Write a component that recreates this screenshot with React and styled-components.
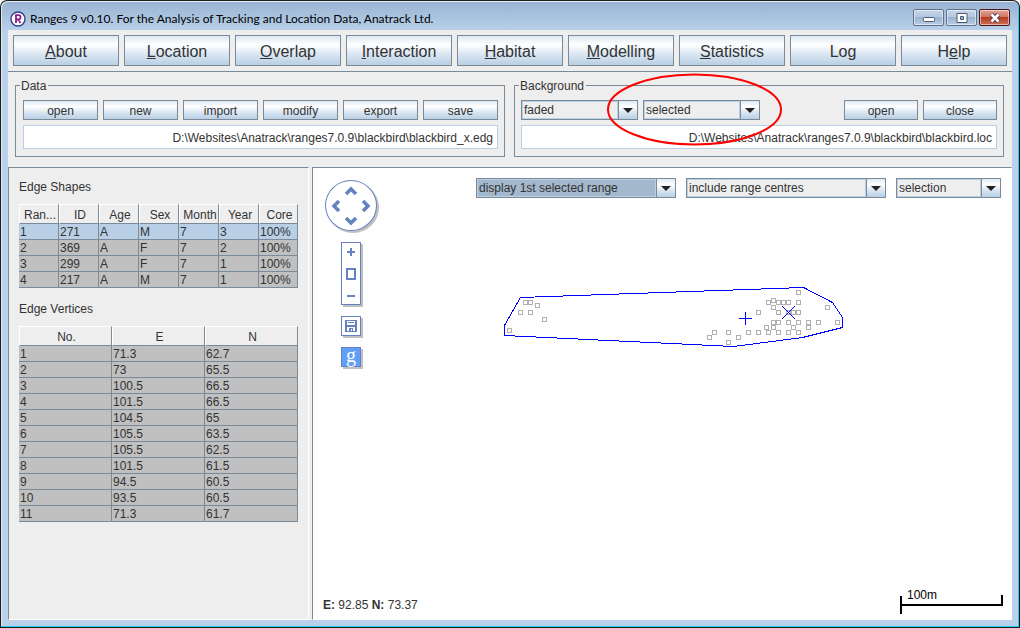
import React from "react";
import styled, { createGlobalStyle, css } from "styled-components";

const line = "#7a8a99";
const pale = "#b8cfe5";
const tool = "#6382bf";
const mark = "#0000ff";
const metal = "linear-gradient(#dde8f3 0%, #ffffff 30%, #dde8f3 60%, #b8cfe5 100%)";

const GlobalStyle = createGlobalStyle`
  *, *::before, *::after { box-sizing: border-box; }
  html, body, #root { height: 100%; }
  body {
    margin: 0;
    background: #ffffff;
    color: #333333;
    font: 12px/16px "Liberation Sans", Arial, sans-serif;
  }
  button, input, select { font: inherit; color: inherit; margin: 0; }
`;

const Window = styled.div`
  min-height: 100%;
  display: flex;
  flex-direction: column;
  padding: 0 6px 7px;
  border: 1px solid #1c1c1c;
  border-right-color: #101820;
  border-radius: 7px 7px 0 0;
  background: linear-gradient(#98b3d2 0, #b9d1ea 30px, #b9d1ea 100%);
  box-shadow: inset -1px -1px 0 #20d0f0, inset 1px 1px 0 #dfeaf5;
`;

const TitleBar = styled.header`
  display: flex;
  align-items: center;
  height: 29px;
  padding: 6px 3px 0 3px;
  gap: 4px;
`;

const Title = styled.h1`
  flex: 1;
  margin: 0;
  color: #000000;
  font: 400 12px/16px Lato, "Open Sans", sans-serif;
`;

const Caption = styled.div`
  display: flex;
  gap: 2px;
  margin-top: -2px;
`;

const CaptionButton = styled.button`
  display: grid;
  place-items: center;
  width: 31px;
  height: 17px;
  padding: 0;
  border: 1px solid ${(p) => (p.$close ? "#4a1420" : "#5f7390")};
  border-radius: 2px;
  background: ${(p) =>
    p.$close
      ? "linear-gradient(#e0a596 0, #cf7563 45%, #b83a22 50%, #cf7058 100%)"
      : "linear-gradient(#c4d5e8 0, #b4c8df 45%, #9bb3cf 50%, #b8cde4 100%)"};
  box-shadow: inset 0 0 0 1px rgba(255, 255, 255, 0.5);
`;

const Client = styled.div`
  flex: 1;
  display: flex;
  flex-direction: column;
  margin: 0 1px;
  background: #eeeeee;
`;

const MenuBar = styled.nav`
  display: grid;
  grid-template-columns: repeat(9, 1fr);
  gap: 5px;
  padding: 5px;
  border-bottom: 1px solid ${line};
`;

const Button = styled.button`
  height: 20px;
  padding: 2px 0 0;
  border: 1px solid ${line};
  background: ${metal};
  line-height: 16px;
  ${(p) => p.$width && css`width: ${p.$width}px;`}
`;

const MenuButton = styled(Button)`
  height: 31px;
  font-size: 16px;
  line-height: 20px;
`;

const Files = styled.div`
  display: grid;
  grid-template-columns: 1fr 1fr;
  gap: 9px;
  padding: 6px 8px 10px 7px;
`;

const Group = styled.fieldset`
  min-width: 0;
  margin: 0;
  padding: 7px 6px;
  border: 1px solid ${line};
`;

const Legend = styled.legend`
  height: 15px;
  margin-left: -2px;
  padding: 0 2px 0 1px;
  line-height: 17px;
`;

const ButtonRow = styled.div`
  display: grid;
  grid-template-columns: repeat(6, 1fr);
  gap: 5px;
`;

const ControlRow = styled.div`
  position: relative;
  display: flex;
  gap: 5px;
`;

const Spacer = styled.div`
  flex: 1;
`;

const PathField = styled.input`
  display: block;
  width: 100%;
  height: 24px;
  margin-top: 5px;
  padding: 2px 4px 0;
  border: 1px solid ${pale};
  background: #ffffff;
  text-align: right;
`;

const DataGroup = styled(Group)`
  padding-left: 7px;

  ${Legend} {
    margin-left: -3px;
  }
`;

const Highlight = styled.svg`
  position: absolute;
  left: 85px;
  top: -28px;
  pointer-events: none;
`;

const ComboFrame = styled.div`
  display: grid;
  grid-template-columns: 1fr 19px;
  width: ${(p) => p.$width}px;
  height: 20px;
  border: 1px solid ${line};
  background: ${metal};
`;

const ComboSelect = styled.select`
  grid-area: 1 / 1 / 2 / 3;
  min-width: 0;
  margin-right: 19px;
  padding: 0 1px;
  appearance: none;
  border: 1px solid ${pale};
  border-radius: 0;
  background: ${(p) => (p.$focused ? "#a3b8cc" : "#eeeeee")};
  line-height: 16px;
`;

const ComboArrow = styled.svg`
  grid-area: 1 / 2 / 2 / 3;
  border-left: 1px solid ${line};
  pointer-events: none;
`;

const Panes = styled.div`
  flex: 1;
  display: grid;
  grid-template-columns: 301px 1fr;
  gap: 3px;
`;

const Pane = styled.section`
  border: solid;
  border-width: 1px;
  border-color: ${line} #ffffff #ffffff ${line};
`;

const TablePane = styled(Pane)`
  padding: 11px 10px;
`;

const Heading = styled.h2`
  margin: 0 0 9px;
  font-size: 12px;
  font-weight: 400;
  line-height: 16px;
`;

const Grid = styled.table`
  width: 279px;
  margin-bottom: 13px;
  table-layout: fixed;
  border-collapse: separate;
  border-spacing: 0;
`;

const HeadCell = styled.th`
  width: ${(p) => p.$width}px;
  height: 20px;
  padding: 2px 0 0 2px;
  border: solid;
  border-width: 1px;
  border-color: #ffffff ${line} ${line} #ffffff;
  font-weight: 400;
  line-height: 16px;
  white-space: nowrap;
`;

const Row = styled.tr`
  background: ${(p) => (p.$selected ? pale : "#c0c0c0")};
`;

const Cell = styled.td`
  height: 16px;
  padding: 2px 1px 0;
  border: solid ${line};
  border-width: 0 1px 1px 0;
  line-height: 13px;
`;

const MapPane = styled(Pane)`
  display: flex;
  flex-direction: column;
  background: #fefefe;
`;

const MapBody = styled.div`
  flex: 1;
  display: flex;
`;

const MapTools = styled.div`
  display: flex;
  flex-direction: column;
  align-items: center;
  gap: 11px;
  width: 76px;
  padding-top: 12px;
`;

const ToolBox = styled.button`
  display: grid;
  place-items: center;
  width: ${(p) => (p.$round ? 52 : 20)}px;
  height: ${(p) => (p.$round ? 51 : 20)}px;
  padding: 0;
  border: 1px solid ${tool};
  border-radius: ${(p) => (p.$round ? "50%" : "0")};
  background: ${(p) => (p.$filled ? "#62a0f8" : "#ffffff")};
  box-shadow: 2px 2px 0 #c0c0c0;
`;

const ZoomBox = styled.div`
  display: flex;
  flex-direction: column;
  width: 20px;
  border: 1px solid ${tool};
  background: #ffffff;
  box-shadow: 2px 2px 0 #c0c0c0;
`;

const ZoomButton = styled.button`
  display: grid;
  place-items: center;
  height: ${(p) => (p.$tall ? 27 : 17)}px;
  padding: 0;
  border: 0;
  background: none;
`;

const GLetter = styled.span`
  padding-bottom: 4px;
  color: #ffffff;
  font: 20px/12px "Liberation Serif", serif;
`;

const Stage = styled.div`
  flex: 1;
  padding: 10px 10px 0 11px;
`;

const Filters = styled.div`
  display: flex;
  justify-content: flex-end;
  gap: 10px;
`;

const Plot = styled.svg`
  display: block;
  margin-top: 82px;
`;

const MapFooter = styled.footer`
  display: flex;
  justify-content: space-between;
  align-items: center;
  padding: 0 8px 4px 10px;
`;

const Position = styled.span`
  padding-top: 8px;
`;

function Combo({ label, options, width, focused }) {
  return (
    <ComboFrame $width={width}>
      <ComboSelect aria-label={label} $focused={focused}>
        {options.map((o) => (
          <option key={o}>{o}</option>
        ))}
      </ComboSelect>
      <ComboArrow width="19" height="18" viewBox="0 0 18 18" aria-hidden="true">
        <path d="M4 7h10l-5 5z" fill="#222222" />
      </ComboArrow>
    </ComboFrame>
  );
}

function DataTable({ columns, rows, selected }) {
  return (
    <Grid>
      <thead>
        <tr>
          {columns.map(([name, width]) => (
            <HeadCell key={name} $width={width} scope="col">{name}</HeadCell>
          ))}
        </tr>
      </thead>
      <tbody>
        {rows.map((row) => (
          <Row key={row[0]} $selected={row[0] === selected}>
            {row.map((value, i) => (
              <Cell key={i}>{value}</Cell>
            ))}
          </Row>
        ))}
      </tbody>
    </Grid>
  );
}

const menu = [
  ["", "A", "bout"], ["", "L", "ocation"], ["", "O", "verlap"], ["", "I", "nteraction"],
  ["", "H", "abitat"], ["", "M", "odelling"], ["", "S", "tatistics"], ["Lo", "g", ""], ["H", "e", "lp"],
];

const shapeColumns = [["Ran...", 40], ["ID", 40], ["Age", 40], ["Sex", 40], ["Month", 40], ["Year", 40], ["Core", 39]];
const shapes = [
  ["1", "271", "A", "M", "7", "3", "100%"],
  ["2", "369", "A", "F", "7", "2", "100%"],
  ["3", "299", "A", "F", "7", "1", "100%"],
  ["4", "217", "A", "M", "7", "1", "100%"],
];

const vertexColumns = [["No.", 93], ["E", 93], ["N", 93]];
const vertices = [
  ["1", "71.3", "62.7"], ["2", "73", "65.5"], ["3", "100.5", "66.5"], ["4", "101.5", "66.5"],
  ["5", "104.5", "65"], ["6", "105.5", "63.5"], ["7", "105.5", "62.5"], ["8", "101.5", "61.5"],
  ["9", "94.5", "60.5"], ["10", "93.5", "60.5"], ["11", "71.3", "61.7"],
];

const fixes = [
  [523, 300], [528, 300], [535, 303], [518, 310], [528, 310], [542, 317], [507, 328],
  [707, 335], [712, 330], [726, 330], [726, 340], [736, 335], [746, 330], [756, 330],
  [756, 310], [766, 300], [771, 298], [771, 305], [776, 300], [781, 300], [786, 300],
  [796, 290], [796, 300], [776, 310], [786, 310], [791, 310], [796, 310], [825, 305],
  [771, 320], [776, 320], [764, 325], [771, 325], [766, 330], [776, 330], [786, 320],
  [791, 325], [786, 330], [796, 320], [796, 330], [806, 320], [806, 325], [816, 320], [835, 320],
];

export default function App() {
  return (
    <>
      <GlobalStyle />
      <Window>
        <TitleBar>
          <svg width="16" height="16" viewBox="0 0 16 16" aria-hidden="true">
            <circle cx="8" cy="8" r="7" fill="#ffffff" stroke="#2f3f8f" strokeWidth="1.4" />
            <path d="M6 12V4.200h2.400a2.100 2.100 0 0 1 0 4.300H6M8.300 8.500l2.200 3.500" fill="none" stroke="#8a1f8f" strokeWidth="1.800" />
          </svg>
          <Title>Ranges 9 v0.10. For the Analysis of Tracking and Location Data, Anatrack Ltd.</Title>
          <Caption>
            <CaptionButton aria-label="Minimize">
              <svg width="12" height="9" viewBox="0 0 12 9">
                <rect x="0.500" y="4.500" width="11" height="4" rx="1" fill="#ffffff" stroke="#4b5a6f" />
              </svg>
            </CaptionButton>
            <CaptionButton aria-label="Restore">
              <svg width="12" height="10" viewBox="0 0 12 10">
                <path d="M1 .5h10v9H1zM4.500 3.500h3v3h-3z" fill="#ffffff" fillRule="evenodd" stroke="#4b5a6f" />
              </svg>
            </CaptionButton>
            <CaptionButton $close aria-label="Close">
              <svg width="12" height="10" viewBox="0 0 12 10">
                <path d="M2.500 1.500l7 7M9.500 1.500l-7 7" stroke="#4a3b4a" strokeWidth="4.500" />
                <path d="M2.500 1.500l7 7M9.500 1.500l-7 7" stroke="#ffffff" strokeWidth="2.600" />
              </svg>
            </CaptionButton>
          </Caption>
        </TitleBar>

        <Client>
          <MenuBar>
            {menu.map(([before, key, after]) => (
              <MenuButton key={before + key + after}>
                {before}<u>{key}</u>{after}
              </MenuButton>
            ))}
          </MenuBar>

          <Files>
            <DataGroup>
              <Legend>Data</Legend>
              <ButtonRow>
                {["open", "new", "import", "modify", "export", "save"].map((t) => (
                  <Button key={t}>{t}</Button>
                ))}
              </ButtonRow>
              <PathField aria-label="Data file" readOnly value={"D:\\Websites\\Anatrack\\ranges7.0.9\\blackbird\\blackbird_x.edg"} />
            </DataGroup>
            <Group>
              <Legend>Background</Legend>
              <ControlRow>
                <Combo label="Background style" options={["faded"]} width={117} />
                <Combo label="Background ranges" options={["selected"]} width={117} />
                <Spacer />
                <Button $width={74}>open</Button>
                <Button $width={74}>close</Button>
                <Highlight width="178" height="76" viewBox="0 0 178 76" aria-hidden="true">
                  <ellipse cx="88.500" cy="37.500" rx="86.500" ry="35" fill="none" stroke="#ff0000" strokeWidth="2" />
                </Highlight>
              </ControlRow>
              <PathField aria-label="Background file" readOnly value={"D:\\Websites\\Anatrack\\ranges7.0.9\\blackbird\\blackbird.loc"} />
            </Group>
          </Files>

          <Panes>
            <TablePane>
              <Heading>Edge Shapes</Heading>
              <DataTable columns={shapeColumns} rows={shapes} selected="1" />
              <Heading>Edge Vertices</Heading>
              <DataTable columns={vertexColumns} rows={vertices} />
            </TablePane>

            <MapPane>
              <MapBody>
                <MapTools>
                  <ToolBox $round aria-label="Pan">
                    <svg width="50" height="49" viewBox="0 0 50 49" fill="none" stroke={tool} strokeWidth="3.500">
                      <path d="M20 13l5-5 5 5M20 37l5 5 5-5M13 20l-5 5 5 5M37 20l5 5-5 5" />
                    </svg>
                  </ToolBox>
                  <ZoomBox>
                    <ZoomButton aria-label="Zoom in">
                      <svg width="8" height="8" viewBox="0 0 8 8"><path d="M0 4h8M4 0v8" stroke={tool} strokeWidth="2" /></svg>
                    </ZoomButton>
                    <ZoomButton $tall aria-label="Fit">
                      <svg width="10" height="12" viewBox="0 0 10 12"><path d="M1 1h8v10H1z" fill="none" stroke={tool} strokeWidth="2" /></svg>
                    </ZoomButton>
                    <ZoomButton aria-label="Zoom out">
                      <svg width="8" height="8" viewBox="0 0 8 8"><path d="M0 4h8" stroke={tool} strokeWidth="2" /></svg>
                    </ZoomButton>
                  </ZoomBox>
                  <ToolBox aria-label="Save">
                    <svg width="12" height="12" viewBox="0 0 12 12">
                      <path d="M0 0h12v12H0z" fill={tool} />
                      <path d="M2 1h8v4H2zM2 7h8v4H2z" fill="#ffffff" />
                      <path d="M3 2h6v1H3zM4 8h4v3H4z" fill={tool} />
                      <path d="M6 9h1v2H6z" fill="#ffffff" />
                    </svg>
                  </ToolBox>
                  <ToolBox $filled aria-label="Google"><GLetter>g</GLetter></ToolBox>
                </MapTools>
                <Stage>
                  <Filters>
                    <Combo label="Range display" options={["display 1st selected range"]} width={200} focused />
                    <Combo label="Range centres" options={["include range centres"]} width={200} />
                    <Combo label="Export scope" options={["selection"]} width={105} />
                  </Filters>
                  <Plot width="460" height="80" viewBox="400 280 460 80" fill="none" shapeRendering="crispEdges">
                    {fixes.map(([x, y]) => (
                      <rect key={`${x}-${y}`} x={x + 0.5} y={y + 0.5} width="4" height="4" stroke="#b0b0b0" />
                    ))}
                    <path d="M520.500 297.500L803.500 287.500L832.500 302.500L842.500 317.500V327.500L802.500 337.500L733.500 346.500L504.500 335.500V325.500z" stroke={mark} />
                    <path d="M739 318.500h13M745.500 312v13M782 306l13 13M795 306l-13 13" stroke={mark} />
                  </Plot>
                </Stage>
              </MapBody>
              <MapFooter>
                <Position><b>E:</b> 92.85 <b>N:</b> 73.37</Position>
                <svg width="103" height="28" viewBox="0 0 103 28">
                  <text x="7" y="12" fill="#000000" fontSize="12">100m</text>
                  <path d="M1 9v18M0 18h103M102 8v11" fill="none" stroke="#000000" strokeWidth="2" />
                </svg>
              </MapFooter>
            </MapPane>
          </Panes>
        </Client>
      </Window>
    </>
  );
}
